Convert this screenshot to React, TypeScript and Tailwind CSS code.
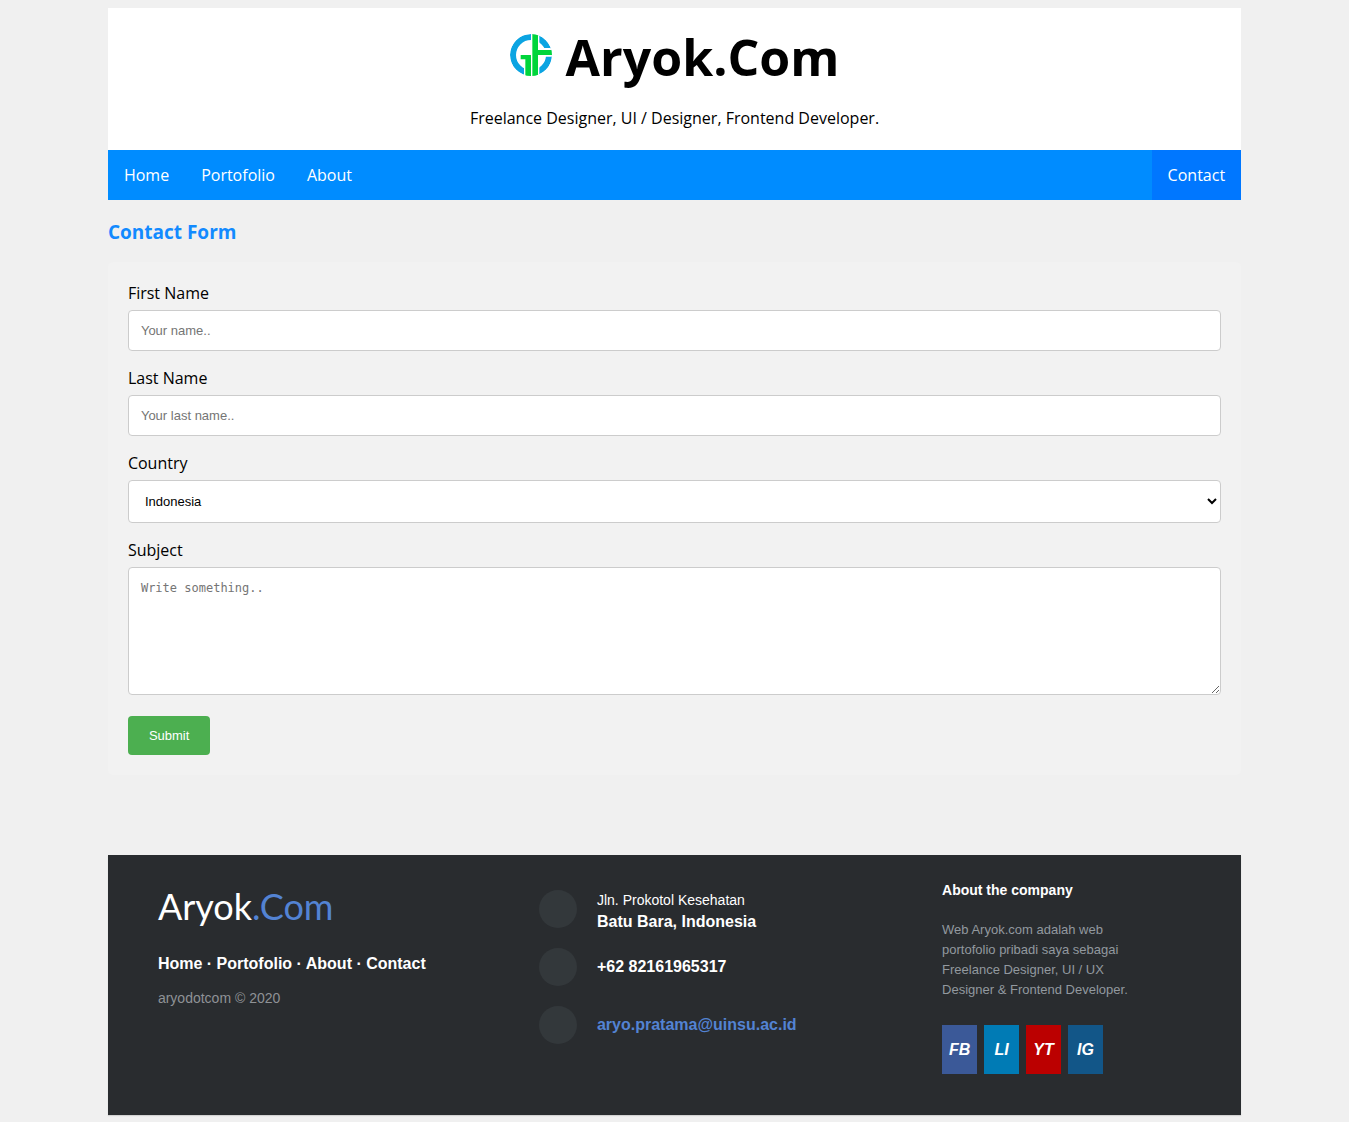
import type { ReactNode } from "react";

const sans = "font-['Liberation_Sans',Arial,sans-serif]";
const field =
  "mt-1.5 mb-4 block w-full rounded border border-[#cccccc] bg-white placeholder:text-[#757575]";

function LogoMark() {
  return (
    <svg viewBox="0 0 126 126" className="size-[42px]" aria-hidden="true">
      <defs>
        <clipPath id="disc">
          <circle cx="63" cy="63" r="63" />
        </clipPath>
      </defs>
      <g clipPath="url(#disc)">
        <circle cx="63" cy="63" r="54" fill="none" stroke="#0ba4e2" strokeWidth="18" />
        <path d="M63 0h25v126H42V76H28V58h35z" fill="#fff" />
        <path d="M83 42h43v26H83z" fill="#fff" />
        <path d="M67 0h17v48h42v15H84v63H67z" fill="#00d53b" />
        <path d="M32 63h31v63H46V76H32z" fill="#00d53b" />
      </g>
    </svg>
  );
}

function NavLink({ children, className = "" }: { children: ReactNode; className?: string }) {
  return (
    <a href="#" className={`px-4 py-3.5 leading-[22px] text-white ${className}`}>
      {children}
    </a>
  );
}

function ContactRow({ children }: { children: ReactNode }) {
  return (
    <li className="flex h-[38px] items-center gap-5">
      <span className="size-[38px] shrink-0 rounded-full bg-[#33383b]" />
      <div className="text-base leading-[22px] font-bold">{children}</div>
    </li>
  );
}

const socials = [
  { label: "FB", color: "bg-[#3b5998]" },
  { label: "LI", color: "bg-[#007bb5]" },
  { label: "YT", color: "bg-[#bb0000]" },
  { label: "IG", color: "bg-[#125688]" },
];

export default function App() {
  return (
    <div className="min-h-screen bg-[#f0f0f0] px-[8%] py-2 font-['Open_Sans',sans-serif] text-base text-black">
      <header className="bg-white px-5 pt-4 pb-[21px] text-center">
        <h1 className="flex items-center justify-center gap-3.5 text-[50px] leading-[66px] font-bold">
          <span className="-mt-1">
            <LogoMark />
          </span>
          Aryok.Com
        </h1>
        <p className="mt-[17px] leading-[22px]">Freelance Designer, UI / Designer, Frontend Developer.</p>
      </header>

      <nav className="flex bg-[#008cff]">
        <NavLink>Home</NavLink>
        <NavLink>Portofolio</NavLink>
        <NavLink>About</NavLink>
        <NavLink className="ml-auto bg-[#0077ff]">Contact</NavLink>
      </nav>

      <main>
        <h2 className="pt-[19px] pb-[17px] text-[19px] leading-[26px] font-bold text-[#128aff]">Contact Form</h2>
        <form className="rounded-[5px] bg-[#f2f2f2] p-5" onSubmit={(e) => e.preventDefault()}>
          <label htmlFor="fname" className="block leading-[22px]">First Name</label>
          <input id="fname" type="text" placeholder="Your name.." className={`${field} ${sans} h-[41px] px-3 text-[13px]`} />
          <label htmlFor="lname" className="block leading-[22px]">Last Name</label>
          <input id="lname" type="text" placeholder="Your last name.." className={`${field} ${sans} h-[41px] px-3 text-[13px]`} />
          <label htmlFor="country" className="block leading-[22px]">Country</label>
          <select id="country" className={`${field} ${sans} h-[43px] px-3 text-[13px]`}>
            <option>Indonesia</option>
            <option>Malaysia</option>
            <option>Singapore</option>
          </select>
          <label htmlFor="subject" className="block leading-[22px]">Subject</label>
          <textarea
            id="subject"
            placeholder="Write something.."
            className="mt-1.5 mb-[21px] block h-32 w-full resize rounded border border-[#cccccc] bg-white p-3 font-['DejaVu_Sans_Mono',Consolas,monospace] text-xs placeholder:text-[#757575]"
          />
          <button type="submit" className={`${sans} block h-[39px] rounded bg-[#4caf50] px-[21px] text-[13px] text-white`}>
            Submit
          </button>
        </form>
      </main>

      <footer
        className={`${sans} mt-20 grid h-[260px] grid-cols-[381fr_403fr_249fr] bg-[#292c2f] px-[50px] font-bold text-white shadow-[0_1px_1px_0_rgba(0,0,0,0.12)]`}
      >
        <section className="pt-7">
          <h3 className="font-['Comic_Sans_MS',Lato,sans-serif] text-4xl leading-[46px] font-normal">
            Aryok<span className="text-[#5383d3]">.Com</span>
          </h3>
          <p className="mt-[23px] leading-6">
            <a href="#">Home</a> · <a href="#">Portofolio</a> · <a href="#">About</a> · <a href="#">Contact</a>
          </p>
          <p className="mt-[11px] text-sm leading-[22px] font-normal text-[#8f9296]">aryodotcom © 2020</p>
        </section>

        <ul className="flex flex-col gap-5 pt-[35px]">
          <ContactRow>
            <span className="mt-1 block text-sm leading-[22px] font-normal">Jln. Prokotol Kesehatan</span>
            Batu Bara, Indonesia
          </ContactRow>
          <ContactRow>+62 82161965317</ContactRow>
          <ContactRow>
            <a href="mailto:aryo.pratama@uinsu.ac.id" className="text-[#5383d3]">aryo.pratama@uinsu.ac.id</a>
          </ContactRow>
        </ul>

        <section className="pt-[25px]">
          <h3 className="text-sm leading-5">About the company</h3>
          <p className="mt-5 max-w-[206px] text-[13px] leading-5 font-normal text-[#92999f]">
            Web Aryok.com adalah web portofolio pribadi saya sebagai Freelance Designer, UI / UX Designer &amp;
            Frontend Developer.
          </p>
          <div className="mt-[25px] flex gap-[7px]">
            {socials.map((s) => (
              <a
                key={s.label}
                href="#"
                className={`flex h-[49px] w-[35px] items-center justify-center italic ${s.color}`}
              >
                {s.label}
              </a>
            ))}
          </div>
        </section>
      </footer>
    </div>
  );
}
